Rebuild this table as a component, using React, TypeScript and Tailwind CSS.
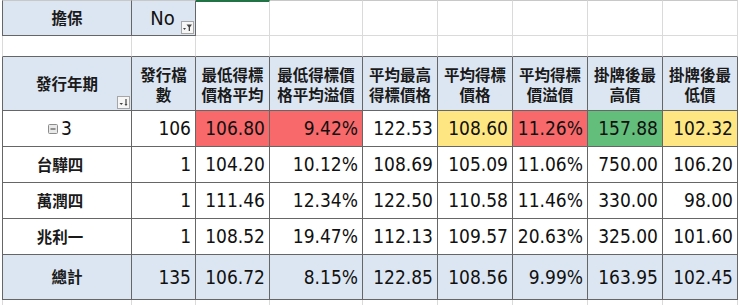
import React from "react";

const GRID =
  "grid grid-cols-[130px_64px_74px_93px_75px_75px_75px_75px_75px]";
const NUM =
  "font-['Liberation_Sans_Narrow','DejaVu_Sans_Condensed','Liberation_Sans',sans-serif] text-[19px] text-[#111]";
const CJK =
  "font-['Noto_Sans_CJK_TC','Noto_Sans_CJK_SC',sans-serif] text-[15.5px] font-semibold text-[#1a1a1a]";

function FilterIcon() {
  return (
    <svg width="13" height="13" viewBox="0 0 13 13">
      <rect x="0.5" y="0.5" width="12" height="12" fill="#f6f6f6" stroke="#a6a6a6" />
      <polygon points="2,7 5,7 3.5,9" fill="#444" />
      <polygon points="5.5,3.5 11,3.5 9,6.2 9,10 7.7,10 7.7,6.2" fill="#444" />
    </svg>
  );
}

function SortIcon() {
  return (
    <svg width="13" height="13" viewBox="0 0 13 13">
      <rect x="0.5" y="0.5" width="12" height="12" fill="#f6f6f6" stroke="#a6a6a6" />
      <polygon points="2.5,7 6,7 4.25,9" fill="#444" />
      <line x1="9" y1="3" x2="9" y2="9" stroke="#444" strokeWidth="1.2" />
      <polygon points="7.5,8 10.5,8 9,10" fill="#444" />
    </svg>
  );
}

function CollapseIcon() {
  return (
    <svg width="10" height="10" viewBox="0 0 10 10" className="mr-[3px]">
      <rect x="0.5" y="0.5" width="9" height="9" rx="1" fill="#e9e9e9" stroke="#8c8c8c" />
      <line x1="2.5" y1="5" x2="7.5" y2="5" stroke="#555" strokeWidth="1.2" />
    </svg>
  );
}

type Row = {
  label: string;
  values: string[];
  colors?: (string | null)[];
  expand?: boolean;
};

const rows: Row[] = [
  {
    label: "3",
    expand: true,
    values: ["106", "106.80", "9.42%", "122.53", "108.60", "11.26%", "157.88", "102.32"],
    colors: [null, "bg-[#f8696b]", "bg-[#f8696b]", null, "bg-[#fee783]", "bg-[#f8696b]", "bg-[#63be7b]", "bg-[#fee783]"],
  },
  {
    label: "台驊四",
    values: ["1", "104.20", "10.12%", "108.69", "105.09", "11.06%", "750.00", "106.20"],
  },
  {
    label: "萬潤四",
    values: ["1", "111.46", "12.34%", "122.50", "110.58", "11.46%", "330.00", "98.00"],
  },
  {
    label: "兆利一",
    values: ["1", "108.52", "19.47%", "112.13", "109.57", "20.63%", "325.00", "101.60"],
  },
];

const total = ["135", "106.72", "8.15%", "122.85", "108.56", "9.99%", "163.95", "102.45"];

const headers: string[][] = [
  ["發行檔", "數"],
  ["最低得標", "價格平均"],
  ["最低得標價", "格平均溢價"],
  ["平均最高", "得標價格"],
  ["平均得標", "價格"],
  ["平均得標", "價溢價"],
  ["掛牌後最", "高價"],
  ["掛牌後最", "低價"],
];

const DARK = "border-[#666]";
const LIGHT = "border-[#dadada]";

export default function App() {
  return (
    <div className="w-[740px] h-[305px] bg-white overflow-hidden pl-[2px]">
      {/* Filter row */}
      <div className={`${GRID} h-[36px]`}>
        <div className={`border border-t-[#c8c8c8] ${DARK} bg-[#dce6f2] flex items-center justify-center ${CJK}`}>
          擔保
        </div>
        <div className={`relative border-r border-b border-t border-t-[#c8c8c8] ${DARK} bg-[#dce6f2] flex items-center justify-center`}>
          <span className={`${NUM} text-[20px] pr-[2px]`}>No</span>
          <div className="absolute right-[1px] bottom-[1px] flex">
            <FilterIcon />
          </div>
        </div>
        <div className={`border-r border-b ${LIGHT} border-t-2 border-t-[#217346]`} />
        {[0, 1, 2, 3, 4, 5].map((i) => (
          <div key={i} className={`border-r border-b border-t ${LIGHT} border-t-[#c8c8c8]`} />
        ))}
      </div>

      {/* Empty row */}
      <div className={`${GRID} h-[21px]`}>
        {[0, 1, 2, 3, 4, 5, 6, 7, 8].map((i) => (
          <div
            key={i}
            className={`border-r border-r-[#dadada] border-b border-b-[#666] ${i === 0 ? "border-l border-l-[#dadada]" : ""}`}
          />
        ))}
      </div>

      {/* Header row */}
      <div className={`${GRID} h-[54px]`}>
        <div className={`relative border-l border-r border-b ${DARK} bg-[#dce6f2] flex items-center justify-center ${CJK}`}>
          發行年期
          <div className="absolute right-[1px] bottom-[1px] flex">
            <SortIcon />
          </div>
        </div>
        {headers.map((h, i) => (
          <div
            key={i}
            className={`border-r border-b ${DARK} bg-[#dce6f2] flex flex-col items-center justify-center leading-[20px] ${CJK}`}
          >
            <span>{h[0]}</span>
            <span>{h[1]}</span>
          </div>
        ))}
      </div>

      {/* Data rows */}
      {rows.map((r, ri) => (
        <div key={ri} className={`${GRID} h-[36px]`}>
          <div className={`border-l border-r border-b ${DARK} bg-white flex items-center justify-center pr-[14px]`}>
            {r.expand ? (
              <span className="flex items-center">
                <CollapseIcon />
                <span className={NUM}>{r.label}</span>
              </span>
            ) : (
              <span className={CJK}>{r.label}</span>
            )}
          </div>
          {r.values.map((v, vi) => (
            <div
              key={vi}
              className={`border-r border-b ${DARK} ${r.colors?.[vi] ?? "bg-white"} flex items-center justify-end pr-[4px] ${NUM}`}
            >
              {v}
            </div>
          ))}
        </div>
      ))}

      {/* Total row */}
      <div className={`${GRID} h-[45px]`}>
        <div className={`border-l border-r border-b ${DARK} bg-[#dce6f2] flex items-center justify-center ${CJK}`}>
          總計
        </div>
        {total.map((v, vi) => (
          <div
            key={vi}
            className={`border-r border-b ${DARK} bg-[#dce6f2] flex items-center justify-end pr-[4px] ${NUM}`}
          >
            {v}
          </div>
        ))}
      </div>

      {/* Trailing grid row */}
      <div className={`${GRID} h-[10px]`}>
        {[0, 1, 2, 3, 4, 5, 6, 7, 8].map((i) => (
          <div
            key={i}
            className={`border-r border-r-[#dadada] ${i === 0 ? "border-l border-l-[#dadada]" : ""}`}
          />
        ))}
      </div>
    </div>
  );
}
